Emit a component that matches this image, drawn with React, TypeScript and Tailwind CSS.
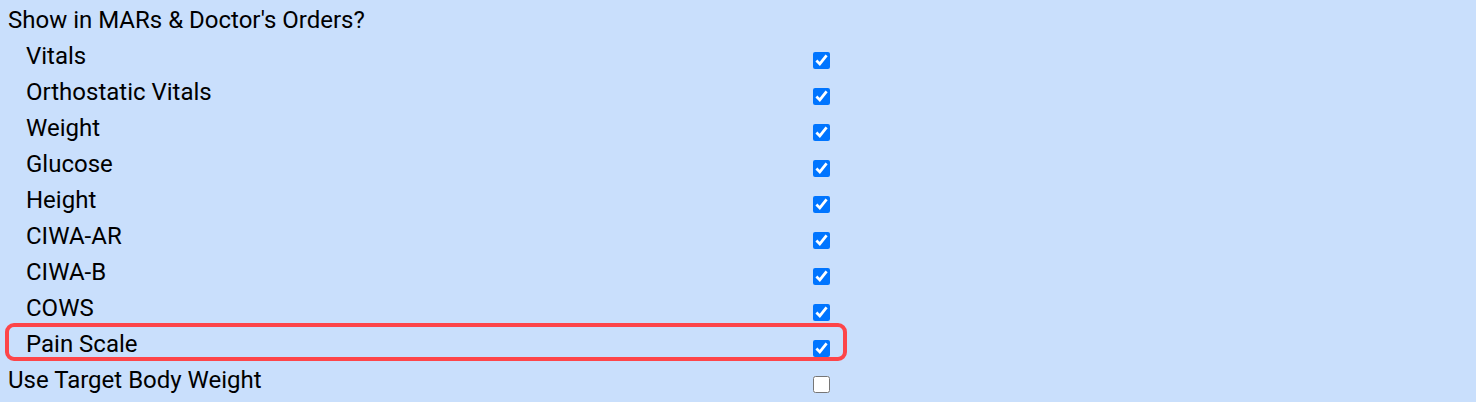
import React, { useState } from 'react';

const items = [
  'Vitals',
  'Orthostatic Vitals',
  'Weight',
  'Glucose',
  'Height',
  'CIWA-AR',
  'CIWA-B',
  'COWS',
  'Pain Scale',
];

const App: React.FC = () => {
  const [checked, setChecked] = useState<Record<string, boolean>>(
    Object.fromEntries(items.map(i => [i, true]))
  );
  const [targetWeight, setTargetWeight] = useState(false);

  return (
    <div
      className="min-h-screen w-full bg-[#c9dffc] text-[24px] text-black"
      style={{ fontFamily: 'Roboto, "Liberation Sans", sans-serif' }}
    >
      <div className="h-9 pt-[2px] leading-9 pl-2">Show in MARs &amp; Doctor's Orders?</div>

      {items.map(item => (
        <div key={item} className="relative flex h-9 items-start">
          {item === 'Pain Scale' && (
            <div className="absolute left-[5px] top-[-1px] h-[38px] w-[842px] rounded-[9px] border-4 border-[#fd4549]" />
          )}
          <div className="w-[813px] pt-[2px] pl-[26px] leading-9">{item}</div>
          <input
            type="checkbox"
            checked={checked[item]}
            onChange={() => setChecked({ ...checked, [item]: !checked[item] })}
            className="mt-[16px] h-[17px] w-[17px] m-0"
          />
        </div>
      ))}

      <div className="flex h-9 items-start">
        <div className="w-[813px] pt-[2px] pl-2 leading-9">Use Target Body Weight</div>
        <input
          type="checkbox"
          checked={targetWeight}
          onChange={() => setTargetWeight(!targetWeight)}
          className="mt-[16px] h-[17px] w-[17px] m-0"
        />
      </div>
    </div>
  );
};

export default App;
